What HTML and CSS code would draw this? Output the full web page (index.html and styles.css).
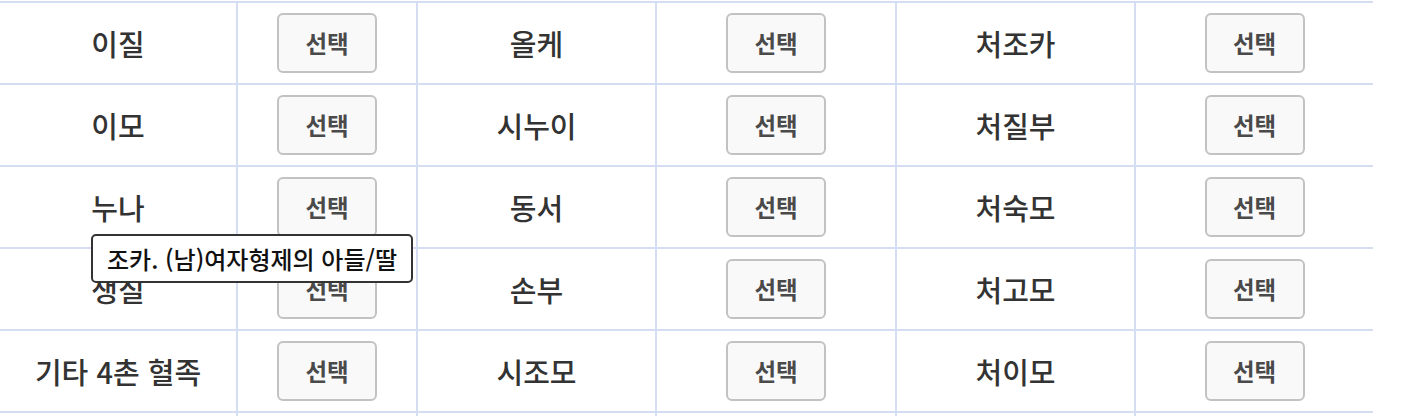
FILE: index.html
```html
<!DOCTYPE html>
<html lang="ko">
<head>
  <meta charset="UTF-8">
  <meta name="viewport" content="width=device-width, initial-scale=1.0">
  <title>관계 선택</title>
  <link rel="stylesheet" href="styles.css">
</head>
<body>
  <div class="relation-table">
    <!-- row 1 -->
    <div class="cell name">이질</div>
    <div class="cell pick"><button class="select-btn">선택</button></div>
    <div class="cell name">올케</div>
    <div class="cell pick"><button class="select-btn">선택</button></div>
    <div class="cell name">처조카</div>
    <div class="cell pick"><button class="select-btn">선택</button></div>

    <!-- row 2 -->
    <div class="cell name">이모</div>
    <div class="cell pick"><button class="select-btn">선택</button></div>
    <div class="cell name">시누이</div>
    <div class="cell pick"><button class="select-btn">선택</button></div>
    <div class="cell name">처질부</div>
    <div class="cell pick"><button class="select-btn">선택</button></div>

    <!-- row 3 -->
    <div class="cell name">누나</div>
    <div class="cell pick"><button class="select-btn">선택</button></div>
    <div class="cell name">동서</div>
    <div class="cell pick"><button class="select-btn">선택</button></div>
    <div class="cell name">처숙모</div>
    <div class="cell pick"><button class="select-btn">선택</button></div>

    <!-- row 4 -->
    <div class="cell name has-tip">
      생질
      <div class="tooltip">조카. (남)여자형제의 아들/딸</div>
    </div>
    <div class="cell pick"><button class="select-btn">선택</button></div>
    <div class="cell name">손부</div>
    <div class="cell pick"><button class="select-btn">선택</button></div>
    <div class="cell name">처고모</div>
    <div class="cell pick"><button class="select-btn">선택</button></div>

    <!-- row 5 -->
    <div class="cell name">기타 4촌 혈족</div>
    <div class="cell pick"><button class="select-btn">선택</button></div>
    <div class="cell name">시조모</div>
    <div class="cell pick"><button class="select-btn">선택</button></div>
    <div class="cell name">처이모</div>
    <div class="cell pick"><button class="select-btn">선택</button></div>

    <div class="cell"></div>
    <div class="cell"></div>
    <div class="cell"></div>
    <div class="cell"></div>
    <div class="cell"></div>
    <div class="cell"></div>
  </div>
</body>
</html>
```

FILE: styles.css
```css
body {
  margin: 0;
  padding-top: 1px;
  font-family: "Noto Sans CJK KR", "Noto Sans", sans-serif;
  background-color: #fff;
  color: #333;
  overflow: hidden;
}

.relation-table {
  display: grid;
  grid-template-columns: 238px 180px 239px 240px 239px 237px;
  grid-auto-rows: 82px;
  width: 1373px;
  border-top: 2px solid #d5ddf3;
}

.cell {
  box-sizing: border-box;
  display: flex;
  align-items: center;
  justify-content: center;
  border-right: 2px solid #d5ddf3;
  border-bottom: 2px solid #d5ddf3;
}

.cell:nth-child(6n) {
  border-right: none;
}

.name {
  font-size: 29px;
  font-weight: 500;
  color: #333;
}

.select-btn {
  width: 100px;
  height: 60px;
  font-family: inherit;
  font-size: 23.5px;
  font-weight: 700;
  color: #4a4a4a;
  background-color: #f9f9f9;
  border: 2px solid #c2c2c2;
  border-radius: 6px;
  cursor: pointer;
}

.select-btn:hover {
  background-color: #f0f0f0;
}

/* hover hint shown over the name cell */
.has-tip {
  position: relative;
}

.tooltip {
  position: absolute;
  left: 91px;
  top: -15px;
  z-index: 10;
  box-sizing: border-box;
  height: 49px;
  padding: 0 14px;
  display: flex;
  align-items: center;
  white-space: nowrap;
  font-size: 24px;
  font-weight: 500;
  color: #111;
  background-color: #fff;
  border: 2px solid #333;
  border-radius: 5px;
}
```
